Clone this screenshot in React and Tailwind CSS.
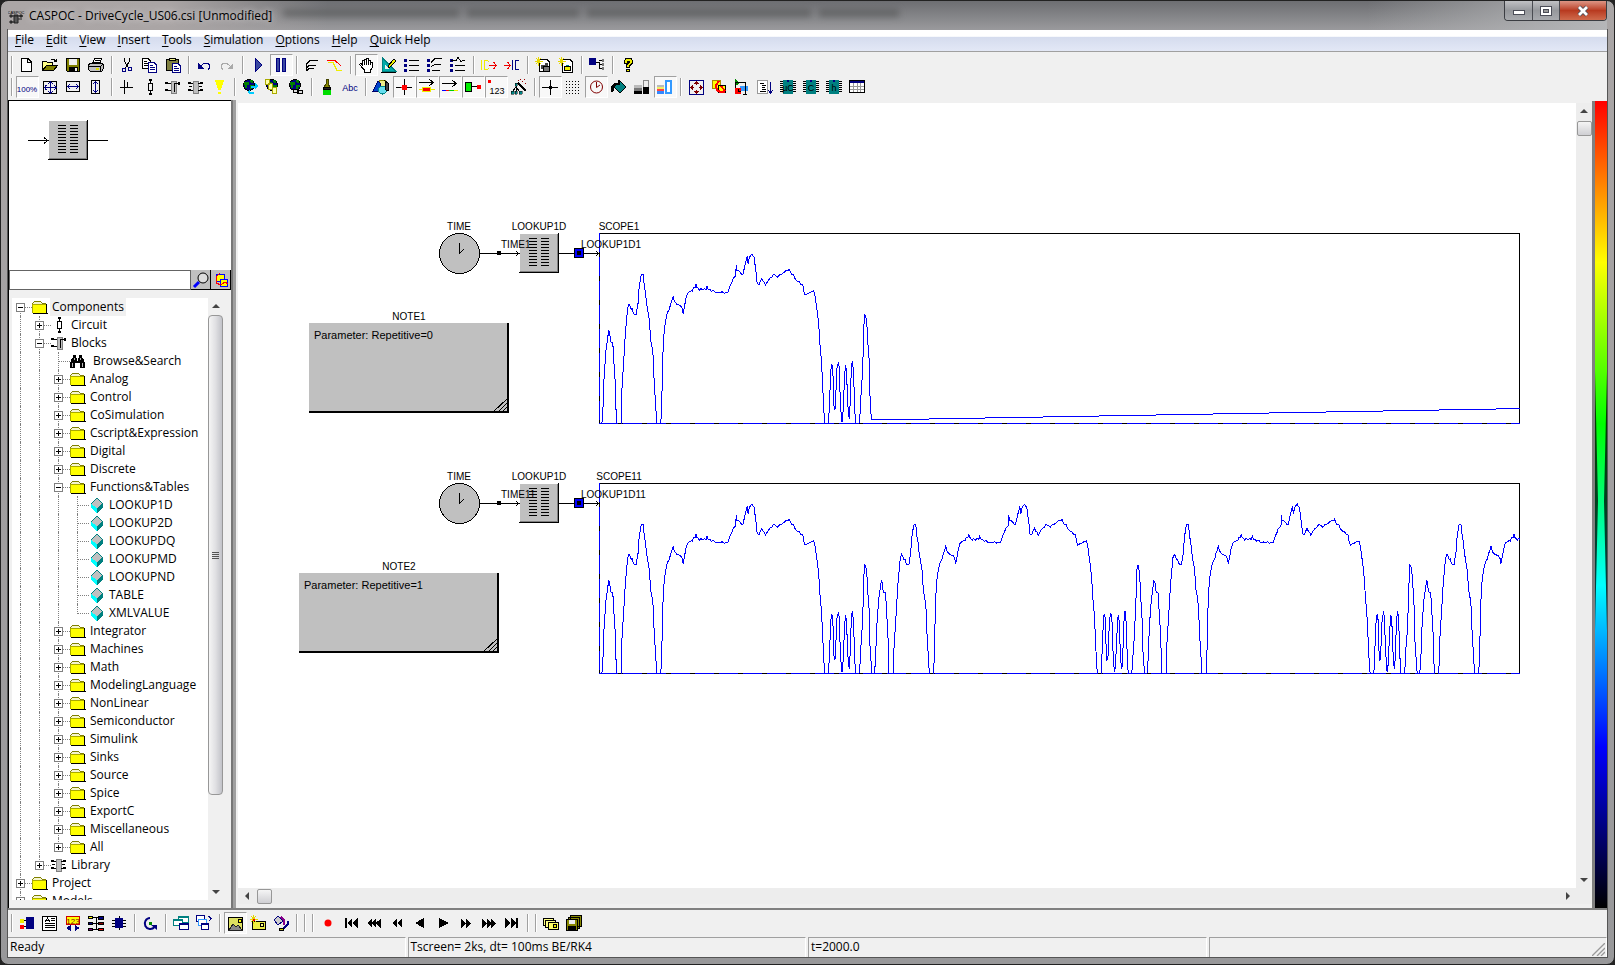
import React, { useState } from "react";
import clsx from "clsx";

const NAVY = "#000080";
const TEAL = "#008080";

const Icon = ({ children, size = 16 }) => (
  <svg width={size} height={size} viewBox="0 0 16 16" shapeRendering="crispEdges" fill="none" stroke="#000" className="shrink-0 overflow-visible" aria-hidden="true">
    {children}
  </svg>
);

const chip = (letter) => (
  <>
    <path d="M0 2.5H16M0 4.5H16M0 6.5H16M0 8.5H16M0 10.5H16M0 12.5H16" />
    <path d="M3 1H13V15H3Z" fill={TEAL} stroke="none" />
    <path d="M7 1H9V3H7Z" fill={NAVY} stroke="none" />
    <text x="8" y="12" textAnchor="middle" fontSize="9" fill="#000" stroke="none" fontFamily="Liberation Sans">{letter}</text>
  </>
);

const globe = (
  <>
    <circle cx="7" cy="6" r="5.5" fill="#000080" stroke="#000" />
    <path d="M2 3H7V6H5V9H3V6H2ZM8 6H12V8H10V10H8ZM8 1H11V4H9V3H8Z" fill="#008000" stroke="none" />
  </>
);

const bulletList = (
  <path d="M0 2H3V5H0ZM0 7H3V10H0ZM0 12H3V15H0Z" fill={NAVY} stroke="none" />
);

const sparkle = <path d="M3.5 0V9M0 4.5H8M1 1L6 7M6 1L1 7" stroke="#e6d800" />;

const icons = {
  new: <path d="M2.5 1.5H9L12.5 5V14.5H2.5ZM8.5 1.5V5.5H12.5" fill="#fff" />,
  open: (
    <>
      <path d="M0.5 13.5V4.5H4.5L5.5 5.5H10.5V8" fill="#ff8" />
      <path d="M0.5 13.5L4.5 8.5H15.5L11.5 13.5Z" fill="#808000" />
      <path d="M9 2.5H12L14.5 4.5M14.5 1.5V4.5H12" />
    </>
  ),
  save: (
    <>
      <path d="M1.5 1.5H14.5V14.5H2.5L1.5 13.5Z" fill="#808000" />
      <path d="M4 2H12V8H4Z" fill="#efefef" stroke="none" />
      <path d="M4 10H13V15H4Z" fill="#000" stroke="none" />
      <path d="M10 11H12V14H10Z" fill="#efefef" stroke="none" />
    </>
  ),
  print: (
    <>
      <path d="M4.5 7L6.5 1.5H13.5L11.5 7" fill="#fff" />
      <path d="M7 3.5H12M6 5.5H11" />
      <path d="M0.5 7.5L2.5 6.5H14.5L15.5 7.5V11.5L13.5 14.5H2.5L0.5 12.5Z" fill="#c0c0c0" />
      <path d="M0.5 9.5H12.5L15.5 7M12.5 9.5V14" />
      <path d="M8 11H11V13H8Z" fill="#dd0" stroke="none" />
    </>
  ),
  cut: (
    <>
      <path d="M5.5 1V4L9.5 11M10.5 1V4L6.5 11" />
      <path d="M3.5 11.5H6.5V14.5H3.5ZM9.5 10.5H12.5V13.5H9.5Z" stroke={NAVY} />
    </>
  ),
  copy: (
    <>
      <path d="M0.5 1.5H6L8.5 4V11.5H0.5Z" fill="#fff" />
      <path d="M2 4.5H5M2 6.5H6M2 8.5H6" />
      <path d="M6.5 5.5H12L14.5 8V15.5H6.5Z" fill="#fff" stroke={NAVY} />
      <path d="M8 8.5H11M8 10.5H13M8 12.5H13" stroke={NAVY} />
    </>
  ),
  paste: (
    <>
      <path d="M1.5 2.5H13.5V13.5H1.5Z" fill="#808040" />
      <path d="M4.5 3.5V1.5H10.5V3.5Z" fill="#ee8" />
      <path d="M7.5 6.5H13L15.5 9V15.5H7.5Z" fill="#fff" stroke={NAVY} />
      <path d="M9 9.5H12M9 11.5H14M9 13.5H14" stroke={NAVY} />
    </>
  ),
  undo: (
    <>
      <path d="M2 6V12H8Z" fill={NAVY} stroke="none" />
      <path d="M4 9.5L8 6.5H12L13.5 8V11L12 13" stroke={NAVY} />
    </>
  ),
  redo: (
    <>
      <path d="M14 6V12H8Z" fill="#aaa" stroke="none" />
      <path d="M12 9.5L8 6.5H4L2.5 8V11L4 13" stroke="#aaa" />
    </>
  ),
  play: <path d="M5 1V15L12 8Z" fill="#3a48a0" stroke={NAVY} />,
  pause: <path d="M3.5 1.5H6.5V14.5H3.5ZM9.5 1.5H12.5V14.5H9.5Z" fill="#3a48a0" stroke={NAVY} />,
  curves: <path d="M2.5 14V7L6 3.5H14M2.5 11L5 8.5H12M2.5 14L5 11.5H10" />,
  limit: (
    <>
      <path d="M0 3.5H8L14 9" stroke="#f00" />
      <path d="M1 5.5H6L10 13.5H15" stroke="#ee0" />
    </>
  ),
  hand: <path d="M4.5 11L1.5 7.5L3 6.5L4.5 8.5V3.5H6.5V2H8.5V1H10.5V3H12.5V5H14.5V10.5L12.5 13V15.5H6.5V13ZM6.5 3V8M8.5 2V8M10.5 3V8M12.5 5V8" fill="#fff" />,
  ruler: (
    <>
      <path d="M1.5 1V14.5H15Z" fill="#0aa" stroke={TEAL} />
      <path d="M4 8V12H8Z" fill="#efefef" stroke="none" />
      <path d="M0 15.5H15M7 9L13 2L15 4L9 10L7 11Z" fill="#ee0" />
    </>
  ),
  list: <>{bulletList}<path d="M5 3.5H15M5 8.5H15M5 13.5H15" /></>,
  listCurve: <>{bulletList}<path d="M4 5.5L8 1.5H15M4 9.5L8 7.5H14M5 13.5H13" /></>,
  listWave: <>{bulletList}<path d="M1 3.5H6L8 0.5L11 4.5L13 3.5H15M5 8.5H15M5 13.5H15" /></>,
  icOut: (
    <>
      <path d="M0.5 3V13M8 4.5L6 3.5H4L3 5V11L4 12.5H6L8 11.5" stroke="#ee0" />
      <path d="M8 8.5H16M12.5 5L15.5 8.5L12.5 12" stroke="#e00" />
    </>
  ),
  icIn: (
    <>
      <path d="M0 8.5H7M3.5 5L6.5 8.5L3.5 12" stroke="#e00" />
      <path d="M8.500 3V13M15.5 4.500L14 3.5H12L11 5V11L12 12.5H14L15.5 11.500" stroke={NAVY} />
    </>
  ),
  sparkDoc: (
    <>
      <path d="M4.5 2.5H12L14.5 5V14.5H4.5Z" fill="#fff" />
      <path d="M6 8H10V12H6ZM10 6H13V10H10Z" fill="#444" stroke="none" />
      <path d="M8 10V14H14V9Z" fill="#777" stroke="#000" />
      {sparkle}
    </>
  ),
  sparkNew: (
    <>
      <path d="M4.5 2.5H12L14.5 5V15.5H4.5Z" fill="#fff" />
      <path d="M6.5 9.5H12.5V13.5H6.5Z" fill="#ee0" stroke="#000" />
      <path d="M8 8.5H11" stroke="#088" />
      {sparkle}
    </>
  ),
  tree: (
    <>
      <path d="M0 1H7V8H0Z" fill={NAVY} stroke="none" />
      <path d="M7 5.5H10.5V11.5H14M10 3.5H14M10 7.500H14" />
      <path d="M13 2H15V5H13ZM13 6H15V9H13ZM13 10H15V13H13Z" fill="#777" stroke="none" />
    </>
  ),
  help: <path d="M4.5 6V3.5L6 1.5H11L12.5 3.5V6L9.5 9V10.5H6.5V8L9.5 5V4.5H7.5V6ZM6.5 12.5H9.5V14.5H6.5Z" fill="#ee0" />,

  hundred: <text x="8" y="13" textAnchor="middle" fontSize="8" fill={NAVY} stroke="none" fontFamily="Liberation Sans">100%</text>,
  fitAll: (
    <>
      <path d="M1.5 2.5H14.5V14.5H1.5Z" />
      <path d="M2 8.5H14M8.5 3V14M4.5 6L2.5 8.5L4.5 11M12 6L14 8.5L12 11M6 5L8.5 3L11 5M6 12L8.5 14L11 12" stroke={NAVY} />
    </>
  ),
  fitWidth: (
    <>
      <path d="M1.5 2.5H14.5V12.5H1.5Z" />
      <path d="M2 7.5H14M5 5L3 7.5L5 10M11 5L13 7.5L11 10" stroke={NAVY} />
    </>
  ),
  fitHeight: (
    <>
      <path d="M3.5 1.5H11.5V14.5H3.5Z" />
      <path d="M7.5 2V14M5 5L7.5 3L10 5M5 11L7.5 13L10 11" stroke={NAVY} />
    </>
  ),
  node: <path d="M1 8.5H9M5.500 1V15M3 8.500H6M8.5 3V8.500M9 8.500H14" />,
  resistor: (
    <>
      <path d="M8.5 1V4M8.5 12V15M6.5 4.5H10.5V11.5H6.5Z" />
      <path d="M7 0H10V2H7ZM7 14H10V16H7Z" fill="#000" stroke="none" />
    </>
  ),
  block: (
    <>
      <path d="M6 2H11V14H6Z" fill="#c0c0c0" stroke="#808080" />
      <path d="M0 3H3V5H0ZM0 10H3V12H0ZM13 3H15V6H13Z" fill="#000" stroke="none" />
      <path d="M3 4.5H6M3 11.5H6M9.500 4.5H13M9.500 4V13" />
    </>
  ),
  library: (
    <>
      <path d="M5 2H10V14H5Z" fill="#c0c0c0" stroke="#808080" />
      <path d="M0 3H3V5H0ZM0 10H3V12H0ZM12 3H15V5H12ZM12 10H15V12H12Z" fill="#000" stroke="none" />
      <path d="M3 4.5H5M3 11.5H5M10 4.5H12M10 11.5H12M1 7.500H4M11 7.500H14" />
    </>
  ),
  alert: <path d="M4 1H13L10 11H7ZM7 13H10V15H7Z" fill="#ff0" stroke="none" />,
  globeSync: <>{globe}<path d="M9 6.5H13V4L16 7L13 10V8.5H9ZM12 12.5H8V10L5 13L8 16V14.5H12Z" fill="#0cf" stroke="none" /></>,
  globeDocs: <>{globe}<path d="M0.5 0.5H4.5V5.5H0.5ZM3.5 4.5H7.5V10.5H3.5ZM7.5 8.5H11.5V14.5H7.5Z" fill="#ffa" stroke="#aa0" /></>,
  globeLink: <>{globe}<path d="M5.5 10.5H10.5V13.5H5.5ZM9.5 11.5H14.5V14.5H9.5Z" fill="#ddd" /></>,
  brush: (
    <>
      <path d="M7 0H9V5L11 8H5L7 5Z" fill="#880" stroke="#440" />
      <path d="M4.5 8H11.5V10H4.5Z" fill="#222" />
      <path d="M4 11H12V16H4Z" fill="#0d0" stroke="none" />
    </>
  ),
  abc: <text x="8" y="12" textAnchor="middle" fontSize="9" fill={NAVY} stroke="none" fontFamily="Liberation Sans">Abc</text>,
  shapes: (
    <>
      <path d="M6 1H12V10H6Z" fill="#ee8" stroke="#880" />
      <path d="M0 12L5 2L7 4V12Z" fill="#04c" stroke="#006" />
      <circle cx="9.500" cy="11" r="4" fill="#6de" stroke="#088" />
      <path d="M12 2L15 4V11H13Z" fill="#444" />
    </>
  ),
  redNode: <><path d="M0 8.5H16M8.5 0V16" /><circle cx="8.5" cy="8.5" r="2.500" fill="#f00" stroke="#f00" /></>,
  arrowBlock: (
    <>
      <path d="M0 3.5H14M10.5 0.5L14.5 3.5L10.5 6.5" />
      <path d="M0 10.5H16" stroke="#ee0" />
      <path d="M3.5 8.5H11.5V12.5H3.5Z" fill="#f00" stroke="#ee0" />
    </>
  ),
  arrowLine: (
    <>
      <path d="M0 4.5H14M10.5 1.5L14.5 4.5L10.5 7.5" />
      <path d="M0 11.500H4" stroke="#00f" /><path d="M4 11.500H7" stroke="#f00" /><path d="M7 11.500H12" stroke="#0c0" /><path d="M12 11.500H16" stroke="#ee0" />
    </>
  ),
  greenRed: (
    <>
      <path d="M0.5 3.5H6.5V12.5H0.5Z" fill="#0e0" />
      <path d="M7 7.5H12" />
      <path d="M12 6H16V10H12Z" fill="#f00" stroke="none" />
    </>
  ),
  digits: (
    <>
      <path d="M0 1H3V4H0Z" fill="#f00" stroke="none" />
      <text x="9" y="15" textAnchor="middle" fontSize="9" fill="#000" stroke="none" fontFamily="Liberation Sans">123</text>
    </>
  ),
  wand: (
    <>
      <path d="M7 4L15 12" strokeWidth="2" />
      <path d="M5 5V8M5 8L1 13M5 8L9 13M5 8V13" />
      <path d="M0 12H3V15H0ZM4 12H6V15H4ZM8 12H11V15H8ZM4 4H6V7H4Z" fill="#088" stroke="#000" strokeWidth="0.5" />
      <path d="M7 1H8V2H7ZM11 2H12V3H11ZM13 0H14V1H13ZM14 4H15V5H14ZM9 0H10V1H9Z" fill="#900" stroke="none" />
    </>
  ),
  blackNode: <><path d="M0 8.5H16M8.5 1V16" /><circle cx="8.5" cy="8.5" r="1.500" fill="#000" /></>,
  dots: <path d="M1 2.5H15M1 5.5H15M1 8.5H15M1 11.5H15M1 14.5H15" strokeDasharray="1 2" />,
  clock: <g shapeRendering="auto"><circle cx="8.500" cy="8" r="6" stroke="#800000" /><path d="M8.5 3V8.5L12 6" stroke="#800000" /></g>,
  bucket: (
    <>
      <path d="M3 8L9 2L15 8L9 14Z" fill={TEAL} />
      <path d="M1 12V8L4 5H8V1M3 7L1 13" strokeWidth="2" />
    </>
  ),
  grayBars: (
    <>
      <path d="M0 6H8V9H0Z" fill="#bbb" stroke="none" /><path d="M0 9H8V12H0Z" fill="#777" stroke="none" /><path d="M0 12H8V15H0Z" fill="#000" stroke="none" />
      <path d="M9.5 1.5H14.5V14.5H9.5Z" fill="#eee" stroke="#888" /><path d="M9 8H15V15H9Z" fill="#000" stroke="none" />
    </>
  ),
  colorBars: (
    <>
      <path d="M0 6H7V8H0Z" fill="#bbb" stroke="none" /><path d="M0 8H7V10H0Z" fill="#ee6" stroke="none" /><path d="M0 10H7V12H0Z" fill="#f44" stroke="none" /><path d="M0 12H7V15H0Z" fill="#38f" stroke="none" />
      <path d="M9 2H14V14H9Z" fill="#fff" stroke="#39f" strokeWidth="2" />
    </>
  ),
  expand: (
    <>
      <path d="M1.5 1.5H15.5V15.5H1.5Z" stroke={NAVY} />
      <path d="M8.5 3V6M8.5 11V14M3 8.5H6M11 8.5H14M6.5 5L8.5 3L10.5 5M6.5 12L8.5 14L10.5 12M5 6.5L3 8.5L5 10.5M12 6.5L14 8.5L12 10.5" stroke="#800000" />
    </>
  ),
  swap: (
    <>
      <path d="M1.5 1.5H9.5V9.5H1.5Z" fill="#ff0" stroke="#a80" />
      <path d="M7.5 6.5H14.5V13.5H7.5Z" fill="#ff0" />
      <path d="M8 2L5 6L6 11L9 13H14M10 7L14 12" stroke="#f00" strokeWidth="2" />
    </>
  ),
  shapesFlow: (
    <>
      <path d="M1 0L5 4L1 7Z" fill="#080" stroke="#080" />
      <path d="M6 7H14V12H6Z" fill="#39f" stroke="none" />
      <circle cx="4" cy="12" r="3.5" fill="#f00" stroke="none" />
      <path d="M1 9V3.5H11.5V15M9 15.5H13M4 12V9.5M4 12H7" />
    </>
  ),
  docSort: (
    <>
      <path d="M0.5 1.5H10.5V14.5H0.5Z" fill="#fff" stroke="#999" />
      <path d="M3 4.5H7M5 6.5H9M5 8.5H8M5 10.5H9M3 12.5H9" />
      <path d="M13.5 3V14M11 11L13.5 14L16 11" stroke={NAVY} />
    </>
  ),
  chipU: chip("µC"),
  chipC: chip("C"),
  chipH: chip("h"),
  table: (
    <>
      <path d="M0.5 1.5H15.5V13.5H0.5Z" fill="#fff" />
      <path d="M1 2H15V4H1Z" fill={NAVY} stroke="none" />
      <path d="M1 7.5H15M1 10.5H15M4.5 4V13M8.5 4V13M11.5 4V13" stroke="#999" />
    </>
  ),

  nodes: (
    <>
      <path d="M7 2H15V14H7Z" fill={NAVY} stroke="none" /><path d="M3 5.5H7M3 11.5H7" />
      <path d="M1 4H5V8H1Z" fill="#ee0" stroke="none" /><path d="M1 10H5V14H1Z" fill="#f00" stroke="none" />
    </>
  ),
  article: (
    <>
      <path d="M0.5 1.5H14.5V15.5H0.5Z" fill="#fff" />
      <path d="M3 7L5.500 3L8 7M4 5.500H7M9 3.5H13M9 5.5H13M3 8.5H13M3 10.5H13M3 12.5H13" />
    </>
  ),
  counter: (
    <>
      <path d="M1.5 1.5H14.5V9.5H1.5Z" fill="#ff0" stroke="#c00" />
      <text x="8" y="9" textAnchor="middle" fontSize="8" fill="#800" stroke="none" fontFamily="Liberation Sans">123</text>
      <path d="M6 10V16L1 13ZM10 10V16L15 13Z" fill={NAVY} stroke="none" />
    </>
  ),
  hierarchy: (
    <>
      <path d="M5 2.5H15M5 8.5H11M5 14.5H11M8.5 3V14" />
      <path d="M0.5 1.5H4.5V3.5H0.5Z" fill="#ff0" /><path d="M0.5 7.5H4.5V9.5H0.5Z" fill={NAVY} /><path d="M0.5 13.5H4.5V15.5H0.5Z" fill="#808" />
      <path d="M10.5 1.5H15.5V4.5H10.5Z" fill={NAVY} /><path d="M10.5 7.5H15.5V9.5H10.5Z" fill="#800" /><path d="M10.5 13.5H15.5V15.5H10.5Z" fill="#f00" />
    </>
  ),
  module: <><path d="M1 5.5H15M1 8.5H15M1 11.5H15M8.5 1V15" /><path d="M4 3H12V13H4Z" fill={NAVY} stroke="none" /></>,
  refresh: (
    <g shapeRendering="auto">
      <path d="M8 3A5.500 5.500 0 1 0 12.500 12" stroke={NAVY} strokeWidth="2" />
      <path d="M9 10H15V15Z" fill={NAVY} stroke="none" />
      <path d="M7 7H10V10H7Z" fill="#080" stroke="none" />
    </g>
  ),
  windows: (
    <>
      <path d="M5.5 1.5H15.5V7.5H5.5Z" fill="#fff" stroke={TEAL} /><path d="M5 1H16V3H5Z" fill={TEAL} stroke="none" />
      <path d="M0.5 4.5H9.5V10.5H0.5Z" fill="#fff" stroke={TEAL} /><path d="M0 4H10V6H0Z" fill={TEAL} stroke="none" />
      <path d="M6.5 8.5H15.5V14.5H6.5Z" fill="#fff" stroke={NAVY} /><path d="M6 8H16V10H6Z" fill={NAVY} stroke="none" />
    </>
  ),
  cascade: (
    <>
      <path d="M0.5 0.5H8.5V6.5H0.5Z" fill="#fff" stroke={NAVY} /><path d="M2.5 4.5H10.5V10.5H2.5Z" fill="#fff" stroke="#39f" />
      <path d="M5.5 8.5H12.5V14.5H5.5Z" fill="#fff" stroke={NAVY} /><path d="M5 8H13V10H5Z" fill={NAVY} stroke="none" />
      <path d="M12 1L14 2.5V5M15.5 3.5L13 6" stroke={NAVY} />
    </>
  ),
  picture: (
    <>
      <path d="M1.5 2.5H15.5V15.5H1.5Z" fill="#dde060" strokeWidth="1" />
      <path d="M2 15L6 9L9 12L11 10L15 15Z" fill="#888" stroke="#222" /><path d="M11 4H14V7H11Z" fill="#ff0" />
    </>
  ),
  sparkPicture: (
    <>
      <path d="M2.5 6.5H15.5V14.5H2.5Z" fill="#ee4" /><path d="M10.5 8.5H13.5V11.5H10.5Z" fill="#ff8" />
      {sparkle}<path d="M3 4H5V6H3Z" fill="#f00" stroke="none" />
    </>
  ),
  paint: (
    <>
      <path d="M1 5L5 1L10 6L5 10Z" fill="#ccc" stroke={NAVY} />
      <path d="M8 2L11 5V10" stroke="#808" strokeWidth="2" />
      <path d="M15 6V9L11 13L7 15" stroke={NAVY} strokeWidth="2" /><path d="M6 13H10V15H6Z" fill="#cc0" />
    </>
  ),
  record: <circle cx="8" cy="8" r="3.5" fill="#f00" stroke="none" shapeRendering="auto" />,
  first: <path d="M2 3H4V13H2ZM9 3V13L4 8ZM15 3V13L9 8Z" fill="#000" stroke="none" />,
  back3: <path d="M6 4V13L1 8ZM10 4V13L5 8ZM15 4V13L9 8Z" fill="#000" stroke="none" />,
  back2: <path d="M8 4V13L3 8ZM13 4V13L8 8Z" fill="#000" stroke="none" />,
  back: <path d="M12 3V13L3 8Z" fill="#000" stroke="none" />,
  forward: <path d="M4 3V13L14 8Z" fill="#000" stroke="none" />,
  forward2: <path d="M3 4V13L8 8ZM8 4V13L13 8Z" fill="#000" stroke="none" />,
  forward3: <path d="M1 4V13L6 8ZM6 4V13L11 8ZM10 4V13L15 8Z" fill="#000" stroke="none" />,
  last: <path d="M1 3V13L7 8ZM7 3V13L12 8ZM12 3H14V13H12Z" fill="#000" stroke="none" />,
  frames: (
    <>
      <path d="M0.5 3.5H10.5V10.5H0.5Z" fill="#ff8" /><path d="M2.5 5.5H12.5V12.5H2.5Z" fill="#ff8" />
      <path d="M5.5 7.5H15.5V14.5H5.5Z" fill="#ff6" /><path d="M10.5 9.5H13.5V12.5H10.5Z" fill="#ee0" />
    </>
  ),
  saveAll: (
    <>
      <path d="M4.5 0.5H15.5V11.5H4.5ZM2.5 2.5H13.5V13.5H2.5Z" fill="#880" />
      <path d="M0.5 4.5H11.5V15.5H0.5Z" fill="#880" /><path d="M3 5H9V9H3Z" fill="#eee" stroke="none" /><path d="M2 11H10V15H2Z" fill="#000" stroke="none" />
    </>
  ),

  folder: (
    <>
      <path d="M0.5 13V4.5L2.5 2.5H8.5L10.5 4.5H14" fill="#f5f5d0" stroke="#808000" />
      <path d="M0 5H14V14H0Z" fill="#ff0" stroke="none" />
      <path d="M0.5 5V14M1 5.5H14" stroke="#aa0" />
      <path d="M1 14.5H15.5M14.5 5V14" />
    </>
  ),
  binoculars: (
    <>
      <path d="M3 2H6V5H3ZM9 2H12V5H9ZM2 5H7V8H8V5H13L15 10V15H10V10H5V15H0V10Z" fill="#000" stroke="none" />
      <path d="M2.5 10V14M4.5 5V7M10.5 5V7M12.5 10V14" stroke="#bbb" />
    </>
  ),
  gem: (
    <>
      <path d="M8 1L14 8L8 11L2 8Z" fill="#c0c0c0" stroke="none" />
      <path d="M2 7L8 11V16L2 11Z" fill="#0ff" stroke="none" />
      <path d="M14 6L8 11V16L14 11Z" fill={TEAL} stroke="none" />
      <path d="M8 1L14 7M8 1L2 7" stroke={TEAL} />
    </>
  ),
  magnifier: (
    <g shapeRendering="auto">
      <path d="M6 10L1 15" stroke="#00f" strokeWidth="3" />
      <circle cx="10" cy="6" r="5" fill="#ddd" />
    </g>
  ),
  replace: (
    <>
      <path d="M3.5 2.5H11.5V9.5H3.5Z" fill="#ff0" stroke="#00f" /><path d="M7.5 7.5H14.5V14.5H7.5Z" fill="#ff0" stroke="#00f" />
      <path d="M7 1L3 5V11L8 13L12 10L15 12" stroke="#f00" />
    </>
  ),
};

// "|" is a divider, a leading "*" marks a button that is pressed in
const toolbars = [
  "new open save print | cut copy paste | undo redo | play *pause | curves limit | *hand ruler list listCurve listWave | icOut icIn | sparkDoc sparkNew | tree | help",
  "*hundred fitAll fitWidth fitHeight | node resistor block library alert | globeSync globeDocs globeLink | brush abc | shapes *redNode *arrowBlock *arrowLine *greenRed *digits wand | *blackNode dots *clock bucket grayBars *colorBars | expand swap shapesFlow docSort chipU chipC chipH table",
];
const playbar =
  "nodes article counter hierarchy module | refresh | windows cascade | *picture sparkPicture paint | | | record first back3 back2 back forward forward2 forward3 last | | frames saveAll";

const Divider = () => (
  <span className="flex h-[18px] w-2 shrink-0 justify-center">
    <span className="h-full w-0.5 border-l border-r border-l-[#a0a0a0] border-r-white" />
  </span>
);

const Toolbar = ({ items, label }) => (
  <div role="toolbar" aria-label={label} className="flex h-[22px] items-center">
    <Divider />
    {items.split(" ").map((item, i) => {
      if (item === "|") return <Divider key={i} />;
      const pressed = item.startsWith("*");
      const name = item.replace("*", "");
      return (
        <button
          key={i}
          aria-label={name}
          aria-pressed={pressed}
          className={clsx(
            "flex h-[22px] w-[23px] shrink-0 items-center border pl-0.5",
            pressed ? "border-t-[#a0a0a0] border-l-[#a0a0a0] border-r-white border-b-white bg-[#f8f8f8]" : "border-transparent"
          )}
        >
          <Icon>{icons[name]}</Icon>
        </button>
      );
    })}
  </div>
);

const menus = ["File", "Edit", "View", "Insert", "Tools", "Simulation", "Options", "Help", "Quick Help"];

const TitleBar = () => (
  <header className="relative flex h-[29px] shrink-0 items-center overflow-hidden bg-linear-to-b from-[#6d6e72] to-[#9a9a9d]">
    <div className="absolute inset-y-0 left-0 w-80 bg-linear-to-r from-[#aba6a6] via-[#aaa5a5] to-transparent" />
    <div className="absolute inset-y-0 right-0 w-60 bg-linear-to-r from-transparent to-[#b5b6b8]" />
    <div className="absolute top-2 left-[275px] flex gap-2 blur-[3px]">
      {["w-44", "w-28", "w-56", "w-20"].map((w) => (
        <span key={w} className={clsx("h-2 bg-[#4a4c4c]/50", w)} />
      ))}
    </div>
    <div className="relative flex items-center gap-1">
      <svg width="17" height="16" viewBox="0 0 17 16" aria-hidden="true">
        <text x="8" y="6" textAnchor="middle" fontSize="4" fontFamily="Liberation Sans">CASPOC</text>
        <path d="M2 7H4V9H2ZM2 13H4V15H2ZM6 7H10V15H6ZM12 7H14V9H12ZM4 8H15M3 14H7M10 11H14" fill="#555" stroke="#222" />
      </svg>
      <h1 className="text-[12px] leading-4 text-shadow-[0_0_6px_#e8e4e4]">CASPOC - DriveCycle_US06.csi [Unmodified]</h1>
    </div>
    <div className="absolute top-0 right-0 flex h-5 overflow-hidden rounded-b border border-t-0 border-[#3b3d42]">
      <button aria-label="Minimize" className="flex w-7 items-center justify-center border-r border-[#4a4c52] bg-linear-to-b from-[#c0c1c4] via-[#96989c] to-[#a8aaae]">
        <span className="mt-1 h-[5px] w-3 border border-[#4b4d57] bg-white" />
      </button>
      <button aria-label="Maximize" className="flex w-[27px] items-center justify-center border-r border-[#4a4c52] bg-linear-to-b from-[#c0c1c4] via-[#96989c] to-[#a8aaae]">
        <span className="flex h-[10px] w-3 items-center justify-center border border-[#4b4d57] bg-white">
          <span className="h-1 w-[6px] border border-[#4b4d57] bg-[#999]" />
        </span>
      </button>
      <button aria-label="Close" className="flex w-[46px] items-center justify-center bg-linear-to-b from-[#dc9585] via-[#b83a20] to-[#cf6a4c]">
        <svg width="12" height="12" viewBox="0 0 12 12" aria-hidden="true">
          <path d="M2 2L10 10M10 2L2 10" stroke="#4b4d57" strokeWidth="4.5" />
          <path d="M2 2L10 10M10 2L2 10" stroke="#fff" strokeWidth="2.8" />
        </svg>
      </button>
    </div>
  </header>
);

const tree = [
  [0, "folder", "Components", "-"],
  [1, "resistor", "Circuit", "+"],
  [1, "block", "Blocks", "-"],
  [2, "binoculars", "Browse&Search", ""],
  [2, "folder", "Analog", "+"],
  [2, "folder", "Control", "+"],
  [2, "folder", "CoSimulation", "+"],
  [2, "folder", "Cscript&Expression", "+"],
  [2, "folder", "Digital", "+"],
  [2, "folder", "Discrete", "+"],
  [2, "folder", "Functions&Tables", "-"],
  [3, "gem", "LOOKUP1D", ""],
  [3, "gem", "LOOKUP2D", ""],
  [3, "gem", "LOOKUPDQ", ""],
  [3, "gem", "LOOKUPMD", ""],
  [3, "gem", "LOOKUPND", ""],
  [3, "gem", "TABLE", ""],
  [3, "gem", "XMLVALUE", "", "last"],
  [2, "folder", "Integrator", "+"],
  [2, "folder", "Machines", "+"],
  [2, "folder", "Math", "+"],
  [2, "folder", "ModelingLanguage", "+"],
  [2, "folder", "NonLinear", "+"],
  [2, "folder", "Semiconductor", "+"],
  [2, "folder", "Simulink", "+"],
  [2, "folder", "Sinks", "+"],
  [2, "folder", "Source", "+"],
  [2, "folder", "Spice", "+"],
  [2, "folder", "ExportC", "+"],
  [2, "folder", "Miscellaneous", "+"],
  [2, "folder", "All", "+", "last"],
  [1, "library", "Library", "+", "last"],
  [0, "folder", "Project", "+"],
  [0, "folder", "Models", "+"],
];

const TreeRow = ({ depth, icon, label, toggle, last, first }) => (
  <li className="flex h-[18px] items-center">
    {Array.from({ length: depth }, (_, i) => (
      <span key={i} className="relative h-full w-[19px] shrink-0">
        <span className="absolute inset-y-0 left-[7px] border-l border-dotted border-[#808080]" />
      </span>
    ))}
    <span className="relative h-full w-[19px] shrink-0">
      <span className={clsx("absolute left-[7px] border-l border-dotted border-[#808080]", first ? "top-2" : "top-0", last ? "bottom-2" : "bottom-0")} />
      <span className="absolute top-[9px] left-[8px] w-[11px] border-t border-dotted border-[#808080]" />
      {toggle && (
        <button aria-label={label} className="absolute top-[5px] left-[3px] flex h-[9px] w-[9px] items-center justify-center border border-[#808080] bg-white">
          <svg width="5" height="5" viewBox="0 0 5 5" shapeRendering="crispEdges" stroke="#000" className="shrink-0">
            <path d={toggle === "+" ? "M0 2.5H5M2.5 0V5" : "M0 2.5H5"} />
          </svg>
        </button>
      )}
    </span>
    <Icon>{icons[icon]}</Icon>
    <span className={clsx("px-0.5 leading-[18px] whitespace-nowrap", icon === "binoculars" ? "ml-[5px]" : "ml-0.5", first && "bg-[#f0f0f0]")}>
      {label}
    </span>
  </li>
);

const arrows = {
  up: "M0 5H8L4 1Z",
  down: "M0 2H8L4 6Z",
  left: "M6 0V8L2 4Z",
  right: "M2 0V8L6 4Z",
};

const ArrowButton = ({ dir }) => (
  <button aria-label={`Scroll ${dir}`} className="flex h-[17px] w-[17px] shrink-0 items-center justify-center">
    <svg width="8" height="8" viewBox="0 0 8 8"><path d={arrows[dir]} fill="#444" /></svg>
  </button>
);

const LookupBlock = ({ x, y }) => (
  <g transform={`translate(${x} ${y})`}>
    <path d="M-1 38.5H38.5V-1" stroke="#000" fill="none" />
    <path d="M0 0H38V38H0Z" fill="#c0c0c0" stroke="none" />
    <path d="M0 37.5H37.5V0" stroke="#808080" fill="none" />
    {Array.from({ length: 10 }, (_, i) => (
      <path key={i} d={`M9 ${4.5 + i * 3}H17M21 ${4.5 + i * 3}H29`} stroke="#000" />
    ))}
  </g>
);

const Preview = () => (
  <div className="h-[169px] shrink-0 bg-white">
    <svg width="130" height="80" viewBox="0 0 130 80" shapeRendering="crispEdges" className="block" aria-hidden="true">
      <path d="M19 39.5H39M79 39.5H99M35 36.5L39 39.5L35 42.5" stroke="#000" fill="none" />
      <LookupBlock x={40} y={20} />
    </svg>
  </div>
);

const Sidebar = () => {
  const [query, setQuery] = useState("");
  return (
    <aside className="flex w-[223px] shrink-0 flex-col border-t border-l border-black">
      <Preview />
      <div className="flex h-5 shrink-0 bg-[#c0c0c0]">
        <input aria-label="Search" value={query} onChange={(e) => setQuery(e.target.value)} className="min-w-0 flex-1 border border-[#646464] bg-white px-1 outline-none" />
        <button aria-label="Find" className="flex w-5 items-center justify-center border-r border-b border-black"><Icon>{icons.magnifier}</Icon></button>
        <button aria-label="Replace" className="flex w-5 items-center justify-center border-r border-b border-black"><Icon>{icons.replace}</Icon></button>
      </div>
      <div className="flex min-h-0 flex-1 py-2 pr-2 pl-[3px]">
        <ul className="min-w-0 flex-1 overflow-hidden bg-white pl-px">
          {tree.map(([depth, icon, label, toggle, last], i) => (
            <TreeRow key={i} depth={depth} icon={icon} label={label} toggle={toggle} last={last} first={i === 0} />
          ))}
        </ul>
        <div className="flex w-[15px] shrink-0 flex-col items-center bg-[#f0f0f0]">
          <ArrowButton dir="up" />
          <div className="flex w-full flex-[479] flex-col items-center justify-center gap-px rounded-sm border border-[#979797] bg-linear-to-r from-[#f5f5f5] via-[#e0e0e3] to-[#c2c3c9]">
            {[0, 1, 2, 3].map((i) => <span key={i} className="h-px w-[7px] bg-[#555]" />)}
          </div>
          <div className="flex-[88]" />
          <ArrowButton dir="down" />
        </div>
      </div>
    </aside>
  );
};

// one drive cycle: x, y with 817 units per period, 570 is zero speed
const PERIOD = 817;
const cycle =
  "7,570 9,565 12,520 15,435 17,405 21,350 25,320 29,292 32,297 34,320 37,327 41,327 43,350 45,390 48,435 50,485 52,570 66,570 67,495 70,445 75,365 79,300 83,255 86,223 90,213 94,220 97,228 100,227 103,239 106,243 112,243 114,225 117,210 120,165 123,145 126,127 128,123 132,123 134,140 136,160 139,175 142,205 147,237 151,260 155,320 159,340 163,375 165,435 168,485 171,535 173,570 185,570 187,535 189,465 191,375 193,325 196,285 200,260 205,237 211,227 215,210 219,200 222,189 225,200 228,207 234,213 239,215 244,216 249,225 252,240 254,230 257,215 260,197 265,180 271,175 277,172 280,173 284,162 288,163 291,152 293,162 297,165 301,171 305,165 311,170 315,166 321,168 324,159 327,167 333,169 337,174 343,171 349,178 357,176 363,179 369,175 375,180 381,177 386,178 390,167 394,155 398,147 402,135 407,131 410,125 411,97 413,113 418,112 423,117 427,123 431,124 435,107 438,93 441,83 444,69 447,93 450,75 454,68 459,63 462,71 465,72 467,90 469,105 472,125 474,152 480,153 484,143 488,135 492,145 496,147 499,156 505,145 512,135 517,133 523,123 529,127 535,132 541,125 549,122 555,117 561,112 567,113 570,108 573,115 577,123 583,125 587,135 593,143 600,145 605,153 611,155 614,175 618,185 623,182 630,179 637,175 643,173 646,181 649,197 651,215 654,235 657,260 660,295 663,345 666,375 669,425 672,495 675,550 677,570 688,570 690,520 692,475 694,425 696,395 698,393 701,410 702,475 705,528 708,525 710,475 713,405 717,389 720,400 721,440 723,495 726,545 728,565 731,540 734,475 737,415 739,393 742,415 744,475 747,535 750,555 753,505 755,435 757,400 759,381 762,405 764,455 766,515 768,555 770,570 779,570 782,545 784,495 786,475 788,445 790,395 792,355 794,275 796,245 799,247 802,265 805,305 807,353 810,380 811,470 814,515"
    .split(" ")
    .map((p) => p.split(",").map(Number));

const line = (points) => points.map(([x, y]) => `${x},${y}`).join(" ");
const single = line([[0, 570], ...cycle, [816, 558], [880, 557], [2760, 524]]);
const repeated = line([
  [0, 570],
  ...[0, 1, 2, 3].flatMap((n) => [...cycle, [818, 570]].map(([x, y]) => [x + n * PERIOD, y])),
]);

const Scope = ({ points }) => (
  <div className="absolute top-[15px] left-[179px] h-[191px] w-[921px] border border-black bg-white">
    <svg viewBox="0 0 2760 570" preserveAspectRatio="none" shapeRendering="crispEdges" fill="none" className="absolute -inset-px h-[191px] w-[921px]" aria-hidden="true">
      <g stroke="#0000ff">
        <path d="M1.5 0V569" strokeDasharray="19 5" vectorEffect="non-scaling-stroke" />
        <path d="M0 568.5H2760" strokeDasharray="19 5" vectorEffect="non-scaling-stroke" />
        <polyline points={points} vectorEffect="non-scaling-stroke" />
      </g>
    </svg>
  </div>
);

const Circuit = ({ className, suffix, points }) => (
  <section className={clsx("absolute text-[10px] leading-3", className)}>
    <Scope points={points} />
    <svg width="184" height="60" viewBox="0 0 184 60" shapeRendering="crispEdges" fill="none" stroke="#000" className="relative block" aria-hidden="true">
      <circle cx="39.5" cy="35.5" r="20" fill="#c0c0c0" />
      <path d="M39.5 25V35.5L43.5 31.5M60 35.5H100M96 33.5L99 35.5L96 37.5M138 35.5H180M176 33.5L179 35.5L176 37.5" />
      <path d="M77 33H81V37H77Z" fill="#000" stroke="none" />
      <LookupBlock x={100} y={16} />
      <path d="M154.5 30.5H163.5V39.5H154.5Z" fill="#0000ff" />
      <path d="M157 33H161V37H157Z" fill="#000" stroke="none" />
    </svg>
    <span className="absolute top-[3px] left-0 w-[78px] text-center">TIME</span>
    <span className="absolute top-[3px] left-20 w-[78px] text-center">LOOKUP1D</span>
    <span className="absolute top-[3px] left-40 w-[78px] text-center">SCOPE1{suffix}</span>
    <span className="absolute top-[21px] left-[81px]">TIME1{suffix}</span>
    <span className="absolute top-[21px] left-[161px]">LOOKUP1D1{suffix}</span>
  </section>
);

const Note = ({ className, title, children, boxClass }) => (
  <section className={clsx("absolute w-[200px]", className)}>
    <h2 className="pt-px text-center text-[10px] leading-[13px]">{title}</h2>
    <div className={clsx("flex items-start justify-between border-r-2 border-b-2 border-black bg-[#c0c0c0] text-[11px] leading-3", boxClass)}>
      <p className="pt-[6px] pl-[5px]">{children}</p>
      <svg width="14" height="12" viewBox="0 0 14 12" shapeRendering="crispEdges" stroke="#000" className="shrink-0 self-end" aria-hidden="true">
        <path d="M1 12L14 0M6 12L14 4M10 12L14 8" />
      </svg>
    </div>
  </section>
);

const thumb = "h-[15px] w-[15px] shrink-0 rounded-xs border border-[#979797] bg-linear-to-b from-[#f5f5f5] to-[#cfcfd3]";

const Workspace = () => (
  <main className="flex min-w-0 flex-1 flex-col border-t-[3px] border-[#f0f0f0]">
    <div className="flex min-h-0 flex-1">
      <div className="relative min-w-0 flex-1 overflow-hidden bg-white font-['Liberation_Sans',sans-serif]">
        <Circuit className="top-[115px] left-[182px]" suffix="" points={single} />
        <Circuit className="top-[365px] left-[182px]" suffix="1" points={repeated} />
        <Note className="top-[206px] left-[71px]" title="NOTE1" boxClass="h-[90px]">Parameter: Repetitive=0</Note>
        <Note className="top-[456px] left-[61px]" title="NOTE2" boxClass="h-[80px]">Parameter: Repetitive=1</Note>
      </div>
      <div className="flex w-4 shrink-0 flex-col items-center bg-[#ededed]">
        <ArrowButton dir="up" />
        <div className={clsx(thumb, "mt-px")} />
        <div className="flex-1" />
        <ArrowButton dir="down" />
      </div>
    </div>
    <div className="flex h-4 shrink-0 items-center bg-[#ededed] pr-4">
      <ArrowButton dir="left" />
      <div className={clsx(thumb, "ml-0.5")} />
      <div className="flex-1" />
      <ArrowButton dir="right" />
    </div>
    <div className="h-1 shrink-0 bg-[#f0f0f0]" />
  </main>
);

const ColorScale = () => (
  <div className="mt-px w-[15px] shrink-0 border-l-3 border-[#808080] bg-[linear-gradient(#f00,#ff0_20%,#0f0_40%,#0ff_60%,#00f_80%,#000)] bg-origin-border">
    <svg width="12" height="540" viewBox="0 0 12 540" aria-hidden="true">
      <path d="M0 270L3 400L0 530ZM12 270L9 400L12 530Z" fill="#000" opacity="0.75" />
    </svg>
  </div>
);

const status = ["Ready", "Tscreen= 2ks, dt= 100ms BE/RK4", "t=2000.0", ""];

const StatusBar = () => (
  <footer className="relative flex h-5 shrink-0 gap-0.5">
    {status.map((text, i) => (
      <div key={i} className="flex-1 border-t border-r border-l border-t-[#a0a0a0] border-r-white border-l-[#a0a0a0] pl-0.5 leading-[18px] first:border-l-0">
        {text}
      </div>
    ))}
    <svg width="13" height="13" viewBox="0 0 13 13" stroke="#999" strokeWidth="1.3" className="absolute right-0.5 bottom-px" aria-hidden="true">
      <path d="M0 13L13 0M5 13L13 5M9 13L13 9" />
    </svg>
  </footer>
);

const App = () => (
  <div className="h-screen overflow-hidden bg-[#222]">
    <div className="flex h-full flex-col overflow-hidden rounded-lg border border-[#222] bg-linear-to-b from-[#aaa6a6] to-[#98989a] px-[7px] pb-[7px] font-['Open_Sans','Noto_Sans',sans-serif] text-[12px] text-black select-none">
      <TitleBar />
      <div className="flex min-h-0 flex-1 flex-col bg-[#f0f0f0] outline outline-[#555]">
        <nav className="flex h-[22px] shrink-0 items-start border-b border-[#a0a0a0] bg-linear-to-b from-white from-30% via-[#d5dcee] via-35% to-[#e3e8f6] pl-px">
          {menus.map((menu) => (
            <button key={menu} className="px-[6px] leading-5">
              <span className="underline underline-offset-2">{menu[0]}</span>{menu.slice(1)}
            </button>
          ))}
        </nav>
        <div className="shrink-0 py-0.5">
          <Toolbar items={toolbars[0]} label="Standard" />
          <Toolbar items={toolbars[1]} label="View" />
        </div>
        <div className="flex min-h-0 flex-1">
          <Sidebar />
          <div className="w-[7px] shrink-0 border-r-2 border-l-2 border-r-[#f0f0f0] border-l-[#777] bg-[#a0a0a0]" />
          <Workspace />
          <ColorScale />
        </div>
        <div className="h-[29px] shrink-0 border-t-2 border-[#808080] pt-0.5">
          <Toolbar items={playbar} label="Playback" />
        </div>
        <StatusBar />
      </div>
    </div>
  </div>
);

export default App;
